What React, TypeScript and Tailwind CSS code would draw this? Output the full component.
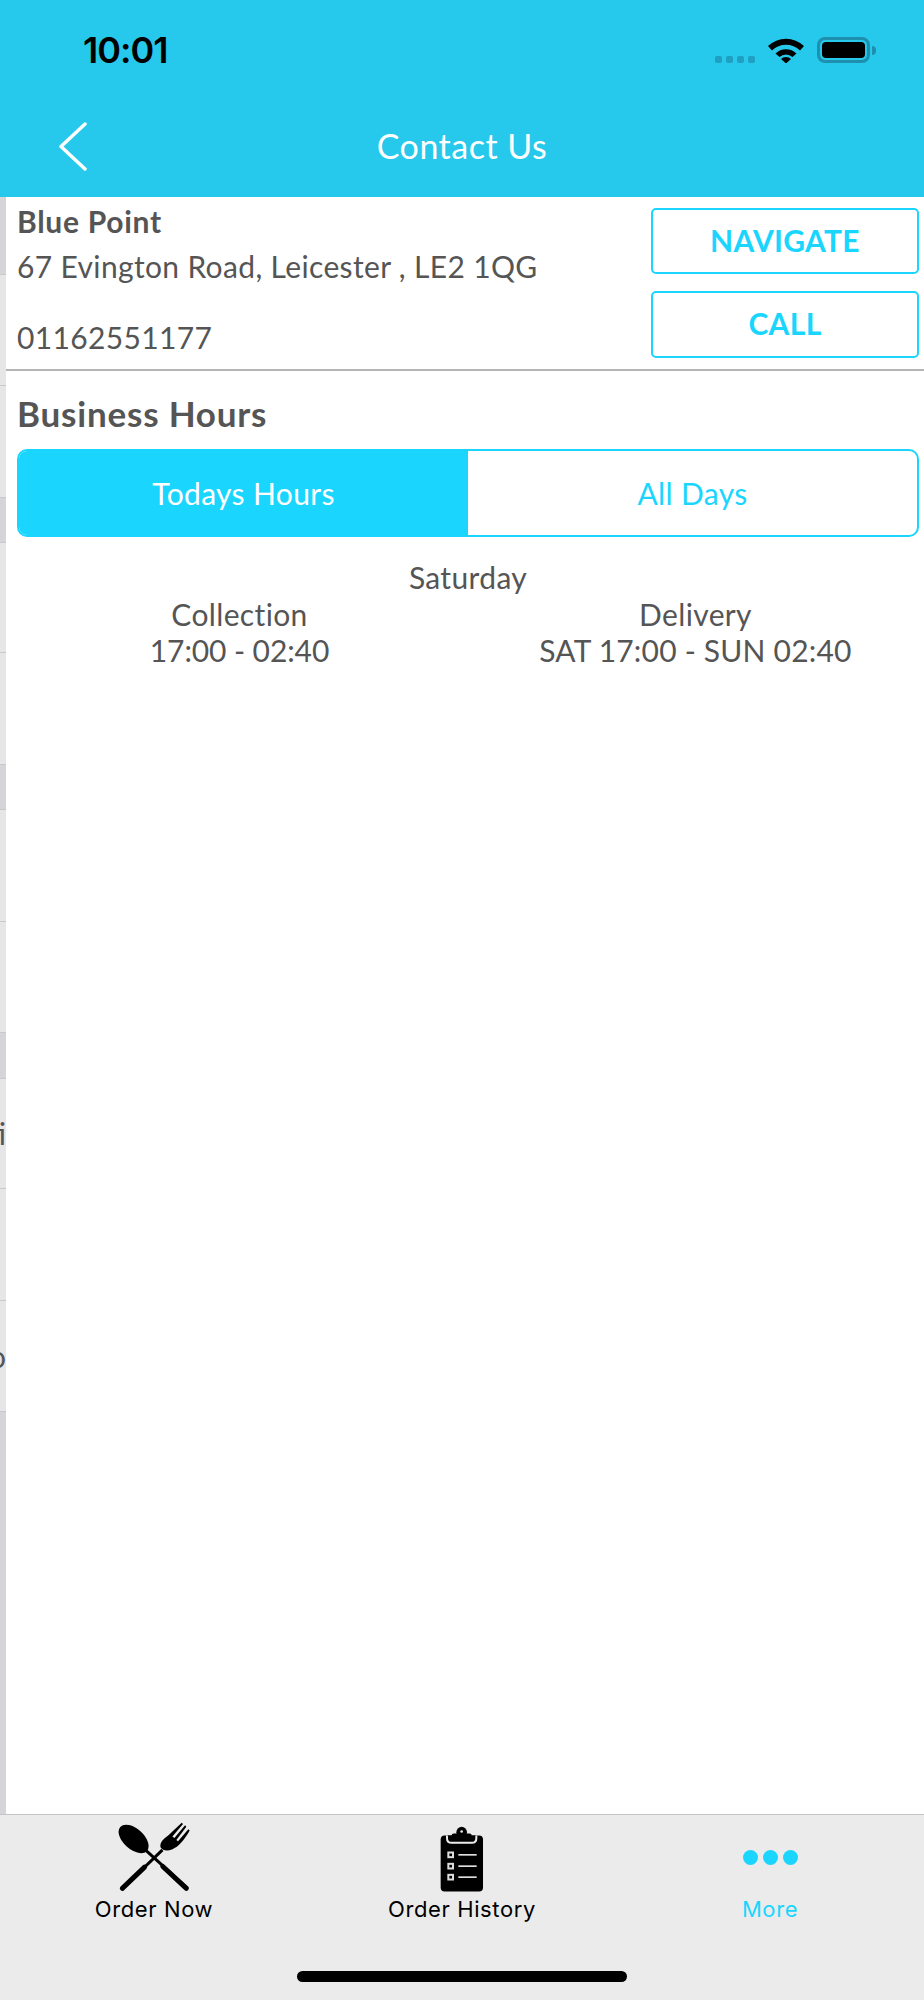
const stripRows = [
  { h: 78, dark: true },
  { h: 111 },
  { h: 112 },
  { h: 45, dark: true },
  { h: 111 },
  { h: 112 },
  { h: 45, dark: true },
  { h: 112 },
  { h: 111 },
  { h: 46, dark: true },
  { h: 110, text: 'ti' },
  { h: 112 },
  { h: 112, text: 'o' },
  { h: 402, dark: true, last: true },
]

function Wifi() {
  return (
    <svg width="36" height="26" viewBox="0 0 36 26">
      <path d="M0 9 A26 26 0 0 1 36 9 L32 13.500 A20 20 0 0 0 4 13.500Z" fill="#000" />
      <path d="M7.500 16.500 A15 15 0 0 1 28.500 16.500 L24.500 20 A9.500 9.500 0 0 0 11.500 20Z" fill="#000" />
      <path d="M13 22 A7 7 0 0 1 23 22 L18 26.500Z" fill="#000" />
    </svg>
  )
}

function Battery() {
  return (
    <div className="flex items-center">
      <div className="h-[26px] w-[53px] rounded-[8px] border-[3px] border-[#1f8fae] p-[2px]">
        <div className="h-full w-full rounded-[4px] bg-black" />
      </div>
      <div className="ml-[2px] h-[9px] w-[4px] rounded-r-full bg-[#1f8fae]" />
    </div>
  )
}

function BackChevron() {
  return (
    <svg className="ml-[59px]" width="28" height="49" viewBox="0 0 28 49" fill="none">
      <path d="M26 2 L2 24.500 L26 47" stroke="#fff" strokeWidth="3.500" strokeLinecap="round" strokeLinejoin="round" />
    </svg>
  )
}

function CutleryIcon() {
  return (
    <svg width="73" height="73" viewBox="80 30 220 220">
      <ellipse cx="127" cy="87" rx="54" ry="31" transform="rotate(42 127 87)" fill="#000" />
      <path d="M160 118 L290 236" stroke="#000" strokeWidth="9" fill="none" />
      <path d="M215 170 L286 236" stroke="#000" strokeWidth="15" strokeLinecap="round" fill="none" />
      <path d="M214 120 L92 238" stroke="#000" strokeWidth="9" fill="none" />
      <path d="M160 172 L93 236" stroke="#000" strokeWidth="15" strokeLinecap="round" fill="none" />
      <path d="M208 112 C206 96 216 88 232 76 L272 38 L276 42 L244 80 L250 84 L282 46 L286 50 L256 90 L261 94 L292 58 L296 62 C280 90 262 112 244 118 C230 124 216 124 208 112Z" fill="#000" />
    </svg>
  )
}

function ClipboardIcon() {
  return (
    <svg width="44" height="67" viewBox="85 30 132 200">
      <rect x="87" y="58" width="127" height="168" rx="12" fill="#000" />
      <path d="M106 58 V66 Q106 80 120 80 H180 Q194 80 194 66 V58" fill="#000" stroke="#ebebeb" strokeWidth="6" />
      <circle cx="150" cy="48" r="16" fill="#000" />
      <rect x="120" y="52" width="60" height="22" rx="6" fill="#000" />
      <circle cx="150" cy="46" r="4" fill="#ebebeb" />
      {[116, 150, 183].map((y) => (
        <g key={y}>
          <rect x="107" y={y - 10} width="20" height="20" fill="#ddd" />
          <rect x="113" y={y - 4} width="8" height="8" fill="#000" />
          <rect x="140" y={y - 2.500} width="55" height="5" fill="#ddd" />
        </g>
      ))}
    </svg>
  )
}

export default function App() {
  return (
    <div className="flex h-[2000px] w-[924px] flex-col overflow-hidden bg-white font-['Lato',sans-serif] text-[#555]">
      <header className="h-[197px] shrink-0 bg-[#26c8ec]">
        <div className="flex h-[100px] items-center justify-between pl-[83px] pr-[48px]">
          <span className="font-['Inter',sans-serif] text-[36px] font-semibold tracking-[-1px] text-black">10:01</span>
          <div className="flex items-center">
            <div className="mt-[19px] mr-[13px] flex gap-[4px]">
              {[0, 1, 2, 3].map((i) => (
                <span key={i} className="h-[7px] w-[7px] rounded-[2px] bg-[#1f9fc1]" />
              ))}
            </div>
            <Wifi />
            <div className="ml-[13px]">
              <Battery />
            </div>
          </div>
        </div>
        <div className="grid h-[92px] grid-cols-[1fr_auto_1fr] items-center">
          <BackChevron />
          <span className="pb-[2px] text-[34px] tracking-[0.5px] text-white">Contact Us</span>
        </div>
      </header>

      <div className="flex min-h-0 flex-1">
        <div className="flex w-[6px] shrink-0 flex-col overflow-hidden">
          {stripRows.map((row, i) => (
            <div
              key={i}
              style={{ height: row.h }}
              className={`flex items-center justify-end overflow-hidden border-[#c9c9cc] text-[30px] leading-none whitespace-nowrap ${row.last ? '' : 'border-b'} ${row.dark ? 'bg-[#d4d4d9]' : 'bg-[#e6e6e6]'}`}
            >
              {row.text}
            </div>
          ))}
        </div>

        <main className="min-w-0 flex-1">
          <section className="flex h-[174px] border-b-2 border-[#b5b5b5] pl-[11px] pr-[5px]">
            <div className="flex-1 pt-[5px]">
              <h2 className="text-[30px] leading-[38px] font-bold tracking-[0.7px]">Blue Point</h2>
              <p className="mt-[7px] text-[30px] leading-[38px] tracking-[0.35px]">67 Evington Road, Leicester , LE2 1QG</p>
              <p className="mt-[33px] text-[30px] leading-[38px] tracking-[0.35px]">01162551177</p>
            </div>
            <div className="flex w-[268px] flex-col gap-[17px] pt-[11px]">
              <button className="h-[66px] rounded-[5px] border-2 border-[#1ad6ff] pb-[2px] text-[30px] font-bold tracking-[0.3px] text-[#1ad6ff]">NAVIGATE</button>
              <button className="h-[67px] rounded-[5px] border-2 border-[#1ad6ff] pb-[2px] text-[30px] font-bold tracking-[0.3px] text-[#1ad6ff]">CALL</button>
            </div>
          </section>

          <section className="pl-[11px] pr-[5px]">
            <h2 className="mt-[21px] text-[35px] leading-[42px] font-bold tracking-[0.8px]">Business Hours</h2>
            <div className="mt-[15px] flex h-[88px] overflow-hidden rounded-[10px] border-2 border-[#1ad6ff] text-[30px] tracking-[0.35px]">
              <div className="flex w-1/2 items-center justify-center bg-[#1ad6ff] text-white">Todays Hours</div>
              <div className="flex w-1/2 items-center justify-center text-[#1ad6ff]">All Days</div>
            </div>
            <p className="mt-[22px] text-center text-[30px] leading-[36px] tracking-[0.35px]">Saturday</p>
            <div className="mt-[1px] grid grid-cols-[445px_1fr] text-center text-[30px] leading-[36px] tracking-[0.35px]">
              <div>
                <p>Collection</p>
                <p className="tracking-[-0.1px]">17:00 - 02:40</p>
              </div>
              <div className="pl-[10px]">
                <p>Delivery</p>
                <p className="tracking-[0.2px]">SAT 17:00 - SUN 02:40</p>
              </div>
            </div>
          </section>
        </main>
      </div>

      <nav className="flex h-[186px] shrink-0 flex-col border-t border-[#c4c4c8] bg-[#ebebeb] font-['Inter',sans-serif] text-[22px] tracking-[0.6px] text-black">
        <div className="grid h-[107px] grid-cols-3">
          <div className="flex flex-col items-center pt-[5px]">
            <CutleryIcon />
            <span className="mt-[2px] leading-[28px]">Order Now</span>
          </div>
          <div className="flex flex-col items-center pt-[11px]">
            <ClipboardIcon />
            <span className="mt-[2px] leading-[28px]">Order History</span>
          </div>
          <div className="flex flex-col items-center pt-[35px] text-[#1ad6ff]">
            <div className="flex gap-[5px]">
              <span className="h-[15px] w-[15px] rounded-full bg-[#1ad6ff]" />
              <span className="h-[15px] w-[15px] rounded-full bg-[#1ad6ff]" />
              <span className="h-[15px] w-[15px] rounded-full bg-[#1ad6ff]" />
            </div>
            <span className="mt-[30px] leading-[28px]">More</span>
          </div>
        </div>
        <div className="mt-[49px] h-[11px] w-[330px] self-center rounded-full bg-black" />
      </nav>
    </div>
  )
}
